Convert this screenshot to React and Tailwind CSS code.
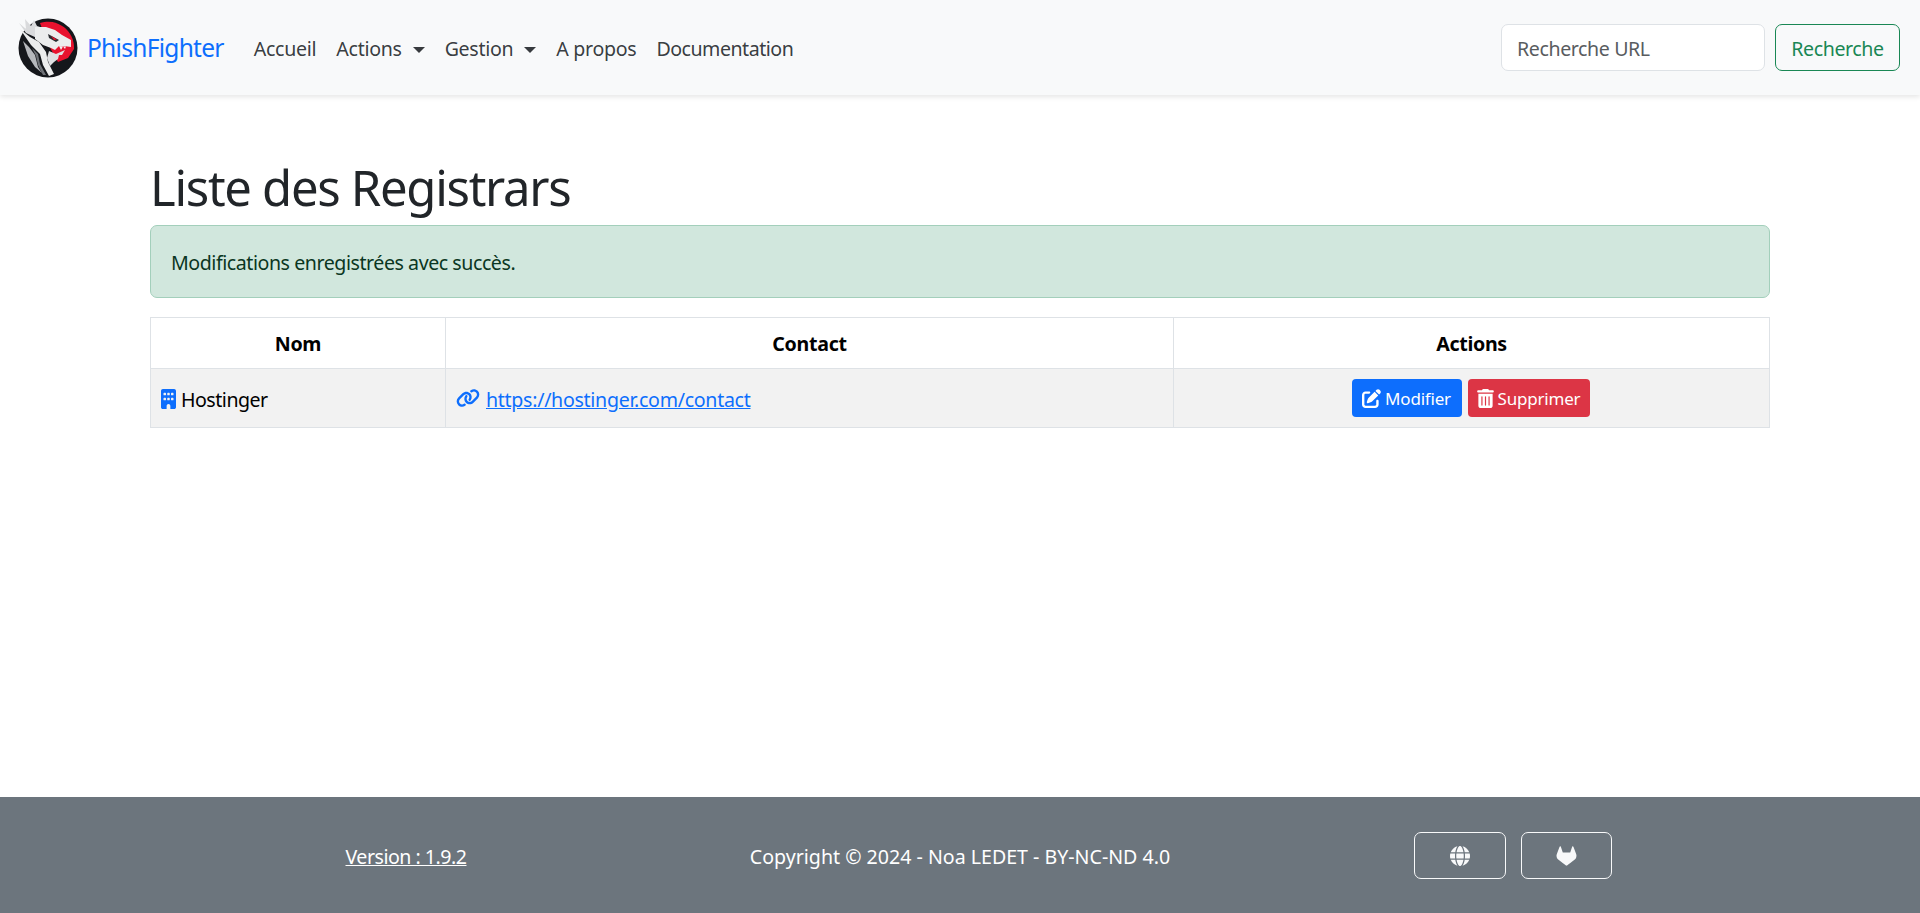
import React from 'react';
import { FaBuilding, FaLink, FaPenToSquare, FaTrashCan, FaGlobe, FaGitlab } from 'react-icons/fa6';

function DragonLogo() {
  return (
    <svg viewBox="0 0 60 60" className="w-[60px] h-[60px] shrink-0">
      <circle cx="30" cy="30" r="29.5" fill="#15171b" />
      {/* red disc, upper right */}
      <path d="M22 5 A26 26 0 0 1 56 31 L50 40 L40 44 L30 26 Z" fill="#e8122e" />
      {/* crest */}
      <path d="M1 5 L8 11 L7 1 L13 8 L16 2 L19 8 L25 10 L27 17 L19 20 L8 15 Z" fill="#d9dadc" />
      {/* head */}
      <path d="M17 9 L28 9 L37 12 L44 17 L53 22 L53 29 L46 28 L41 28 L37 32 L33 30 L25 27 L17 21 Z" fill="#eceded" />
      {/* lower jaw */}
      <path d="M31 33 L38 36 L47 32 L44 37 L41 37 L40 41 L36 44 L32 48 L29 40 Z" fill="#dfe0e2" />
      {/* neck strands */}
      <path d="M2 11 L12 19 L21 24 L28 34 L30 44 L36 56 L31 58 L25 47 L22 36 L13 27 Z" fill="#eceded" />
      <path d="M5 23 L11 29 L17 37 L20 49 L24 55 L17 49 L10 38 Z" fill="#b6b8bc" />
      <path d="M14 30 L20 36 L22 46 L28 57 L25 57 L20 47 L18 38 Z" fill="#6f7277" />
      {/* eye */}
      <path d="M30 16 L41 22 L38 24 L31 20 Z" fill="#2b2d31" />
      <path d="M33 18 L39 21.5 L36 22 Z" fill="#e8122e" />
      {/* teeth */}
      <path d="M41 28 L43 32 L45 28.5 L47 31 L48 28.5 Z" fill="#f2f2f3" />
    </svg>
  );
}

function Caret() {
  return <span className="inline-block ml-[11px] align-[3px] border-t-[6px] border-x-[6px] border-x-transparent border-t-current" />;
}

function NavLink({ children, caret, tracking = 'tracking-[-0.3px]' }) {
  return (
    <a className={`px-[10px] pt-[2px] text-[19.6px] leading-[29.4px] ${tracking} text-[#212529]/90 whitespace-nowrap`}>
      {children}
      {caret && <Caret />}
    </a>
  );
}

export default function App() {
  return (
    <div className="h-[913px] flex flex-col bg-white text-[#212529] font-['Noto_Sans',sans-serif] overflow-hidden">
      {/* Navbar */}
      <nav className="h-[95px] shrink-0 bg-[#f8f9fa] shadow-[0_2px_5px_rgba(0,0,0,0.1)] flex items-center pl-[18px] pr-[20px] z-10">
        <DragonLogo />
        <a className="ml-[9px] mr-[20px] pt-[2px] text-[24.5px] tracking-[-0.7px] text-[#0d6efd]">PhishFighter</a>
        <div className="flex items-center">
          <NavLink>Accueil</NavLink>
          <NavLink caret>Actions</NavLink>
          <NavLink caret>Gestion</NavLink>
          <NavLink>A propos</NavLink>
          <NavLink tracking="tracking-[-0.5px]">Documentation</NavLink>
        </div>
        <form className="ml-auto flex items-center gap-[10px]">
          <input
            placeholder="Recherche URL"
            className="w-[264px] h-[47px] px-[15px] pt-[2px] bg-white border border-[#dee2e6] rounded-[7px] text-[19.6px] tracking-[-0.4px] placeholder:text-[#595c5f] outline-none"
          />
          <button type="button" className="w-[125px] h-[47px] pt-[2px] border border-[#198754] rounded-[7px] text-[19.6px] tracking-[-0.4px] text-[#198754]">
            Recherche
          </button>
        </form>
      </nav>

      {/* Main */}
      <main className="flex-1 px-[150px] pt-[63px]">
        <h1 className="text-[49px] leading-[59px] tracking-[-1.3px] font-normal mb-[8px]">Liste des Registrars</h1>
        <div className="h-[73px] flex items-center px-[20px] pt-[2px] mb-[19px] bg-[#d1e7dd] border border-[#a3cfbb] rounded-[7px] text-[19.6px] tracking-[-0.45px] text-[#0a3622]">
          Modifications enregistrées avec succès.
        </div>
        <table className="w-[1620px] table-fixed border-collapse text-[19.6px] text-black">
          <thead>
            <tr className="h-[51px]">
              <th className="w-[295px] pt-[2px] border border-[#dee2e6] font-bold tracking-[-0.3px]">Nom</th>
              <th className="w-[728px] pt-[2px] border border-[#dee2e6] font-bold tracking-[-0.3px]">Contact</th>
              <th className="pt-[2px] border border-[#dee2e6] font-bold tracking-[-0.3px]">Actions</th>
            </tr>
          </thead>
          <tbody>
            <tr className="h-[59px] bg-[#f2f2f2]">
              <td className="border border-[#dee2e6] px-[10px]">
                <div className="flex items-center gap-[5px]">
                  <FaBuilding className="w-[15px] h-[20px] mt-[3px] text-[#0d6efd]" />
                  <span className="pt-[4px] tracking-[-0.5px]">Hostinger</span>
                </div>
              </td>
              <td className="border border-[#dee2e6] px-[10px]">
                <div className="flex items-center gap-[6px]">
                  <FaLink className="w-[24px] h-[20px] mt-[1px] text-[#0d6efd]" />
                  <a className="pt-[4px] tracking-[-0.3px] text-[#0d6efd] underline">https://hostinger.com/contact</a>
                </div>
              </td>
              <td className="border border-[#dee2e6] px-[10px]">
                <div className="flex items-center justify-center gap-[6px] pr-[2px]">
                  <button className="h-[38px] w-[110px] flex items-center justify-center gap-[4px] bg-[#0d6efd] rounded-[4px] text-[17px] tracking-[-0.2px] text-white">
                    <FaPenToSquare className="w-[19px] h-[19px] mt-[1px]" />
                    <span className="pt-[2px]">Modifier</span>
                  </button>
                  <button className="h-[38px] w-[122px] flex items-center justify-center gap-[4px] bg-[#dc3545] rounded-[4px] text-[17px] tracking-[-0.2px] text-white">
                    <FaTrashCan className="w-[17px] h-[19px] mt-[1px]" />
                    <span className="pt-[2px]">Supprimer</span>
                  </button>
                </div>
              </td>
            </tr>
          </tbody>
        </table>
      </main>

      {/* Footer */}
      <footer className="h-[116px] shrink-0 bg-[#6c757d] text-white flex items-center justify-center">
        <div className="w-[1662px] grid grid-cols-3 items-center text-center text-[19.6px]">
          <a className="pt-[3px] underline tracking-[-0.5px]">Version : 1.9.2</a>
          <span className="pt-[3px]">Copyright © 2024 - Noa LEDET - BY-NC-ND 4.0</span>
          <div className="flex justify-center gap-[15px] pr-[3px]">
            <a className="w-[92px] h-[47px] pt-[2px] flex items-center justify-center border border-[#f8f9fa] rounded-[7px] text-[#f8f9fa]">
              <FaGlobe className="w-[20px] h-[20px]" />
            </a>
            <a className="w-[91px] h-[47px] pt-[2px] flex items-center justify-center border border-[#f8f9fa] rounded-[7px] text-[#f8f9fa]">
              <FaGitlab className="w-[21px] h-[20px]" />
            </a>
          </div>
        </div>
      </footer>
    </div>
  );
}
